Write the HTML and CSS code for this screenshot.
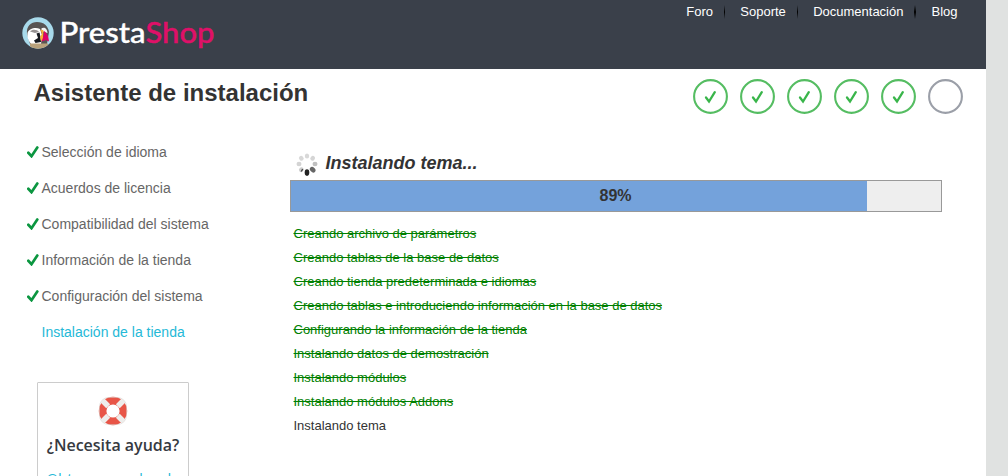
FILE: index.html
```html
<!DOCTYPE html>
<html lang="es">
<head>
<meta charset="utf-8">
<title>Asistente de instalación</title>
<link rel="stylesheet" href="styles.css">
</head>
<body>
<svg class="defs" width="0" height="0">
  <symbol id="tick" viewBox="0 0 12 12"><path d="M1.3 6.8 4.5 10.2 10.3 1.5" fill="none" stroke="#0b9640" stroke-width="2.7" stroke-linecap="round"/></symbol>
  <symbol id="step" viewBox="0 0 35 35"><circle cx="17.5" cy="17.5" r="16.4" fill="#fff" stroke="#55bd62" stroke-width="2.1"/><path d="M13 18.5 16 22.5 21.8 13.2" fill="none" stroke="#39b54a" stroke-width="2.3" stroke-linecap="round"/></symbol>
</svg>
<div class="page">
  <header class="header">
    <svg class="logo" width="200" height="40" viewBox="0 0 200 40">
      <defs><clipPath id="badge"><circle cx="16" cy="16" r="15.7"/></clipPath></defs>
      <g clip-path="url(#badge)">
        <rect width="32" height="32" fill="#a8daeb"/>
        <path d="M5 17C4 9 9 5 15 5 22 5 26 9 27 15L25 27H8Z" fill="#585453"/>
        <path d="M5.500 16C7 11 14 10 18 12L20 18 19 27H9C6 23 5 20 5.500 16Z" fill="#fff"/>
        <path d="M19 12C21 10 25 10 25.500 16L22 15Z" fill="#f4f4f4"/>
        <path d="M8 14.500C10 12 15 12 17 15L13 16Z" fill="#969292"/>
        <path d="M14.500 16.500 17.500 15.500 18.500 20 19 25 13.500 26 12 23.500 16 21Z" fill="#171a20"/>
        <path d="M18.500 12.500 21.500 13.500 21 23 19 24 18 20 20 17Z" fill="#fbb034"/>
        <path d="M22 14C25 16 26.500 19 27 24.500L24 23 19.500 24.500C21 21 22 18 22 14Z" fill="#df0067"/>
        <path d="M8 26.500H26V32H8Z" fill="#b9a17b"/>
      </g>
      <text class="brand" x="37.5" y="26" textLength="86" lengthAdjust="spacingAndGlyphs">Presta</text>
      <text class="brand brand-pink" x="123.5" y="26" textLength="69" lengthAdjust="spacingAndGlyphs">Shop</text>
    </svg>
    <nav class="links"><a>Foro</a><i class="sep"></i><a>Soporte</a><i class="sep"></i><a>Documentación</a><i class="sep sep-wide"></i><a>Blog</a></nav>
  </header>
  <div class="titlebar">
    <h1>Asistente de instalación</h1>
    <div class="steps">
      <svg><use href="#step"/></svg><svg><use href="#step"/></svg><svg><use href="#step"/></svg><svg><use href="#step"/></svg><svg><use href="#step"/></svg>
      <svg viewBox="0 0 35 35"><circle cx="17.5" cy="17.5" r="16.4" fill="#fff" stroke="#9b9fa8" stroke-width="2.1"/></svg>
    </div>
  </div>
  <div class="content">
    <aside>
      <ul class="menu">
        <li><svg><use href="#tick"/></svg>Selección de idioma</li>
        <li><svg><use href="#tick"/></svg>Acuerdos de licencia</li>
        <li><svg><use href="#tick"/></svg>Compatibilidad del sistema</li>
        <li><svg><use href="#tick"/></svg>Información de la tienda</li>
        <li><svg><use href="#tick"/></svg>Configuración del sistema</li>
        <li class="current">Instalación de la tienda</li>
      </ul>
      <div class="help">
        <svg width="30" height="30" viewBox="0 0 30 30">
          <circle cx="15" cy="15" r="10.4" fill="none" stroke="#e85547" stroke-width="7.6"/>
          <path d="M4.500 4.500 10.2 10.2M25.500 4.500 19.8 10.200M4.500 25.500 10.200 19.800M25.500 25.500 19.800 19.800" stroke="#eeedeb" stroke-width="5.5"/>
          <rect x="1.5" y="1.5" width="27" height="27" rx="9" fill="none" stroke="#d8d4d0" stroke-width=".6"/>
        </svg>
        <strong>¿Necesita ayuda?</strong>
        <a>Obtener ayuda a la</a>
      </div>
    </aside>
    <main>
      <h2><svg width="24" height="24" viewBox="-12 -12 24 24">
        <g><ellipse cy="-8" rx="2.2" ry="2.5" fill="#d8d8d8"/><ellipse cy="-8" rx="2.2" ry="2.5" fill="#d5d5d5" transform="rotate(45)"/><ellipse cy="-8" rx="2.2" ry="2.5" fill="#c0c0c0" transform="rotate(90)"/><ellipse cy="-8" rx="2.4" ry="3.2" fill="#666" transform="rotate(135)"/><ellipse cy="-8.6" rx="2.3" ry="3.3" fill="#222" transform="rotate(180)"/><ellipse cy="-8" rx="2.2" ry="2.5" fill="#ccc" transform="rotate(225)"/><ellipse cy="-8" rx="2.2" ry="2.5" fill="#d4d4d4" transform="rotate(270)"/><ellipse cy="-8" rx="2.2" ry="2.5" fill="#d8d8d8" transform="rotate(315)"/></g>
        <path d="M-5.800 7.500-4.300 5.200" stroke="#444" stroke-width="1.3"/>
      </svg>Instalando tema...</h2>
      <div class="progress"><div class="fill"></div><span>89%</span></div>
      <ol class="tasks">
        <li class="done">Creando archivo de parámetros</li>
        <li class="done">Creando tablas de la base de datos</li>
        <li class="done">Creando tienda predeterminada e idiomas</li>
        <li class="done">Creando tablas e introduciendo información en la base de datos</li>
        <li class="done">Configurando la información de la tienda</li>
        <li class="done">Instalando datos de demostración</li>
        <li class="done">Instalando módulos</li>
        <li class="done">Instalando módulos Addons</li>
        <li>Instalando tema</li>
      </ol>
    </main>
  </div>
</div>
</body>
</html>
```
FILE: styles.css
```css
* { box-sizing: border-box; margin: 0; padding: 0; }
html, body { height: 476px; overflow: hidden; }
body { background: #e0e2e1; font: 13px/24px "Liberation Sans", Arial, sans-serif; color: #333; }
svg { display: block; flex: none; }
.defs { position: absolute; }
.page { width: 986px; height: 476px; background: #fff; overflow: hidden; }
.header { height: 69px; background: #3a404a; display: flex; justify-content: space-between; padding-left: 22px; }
.logo { margin-top: 17px; }
.brand { font: 500 28px Lato, sans-serif; fill: #fff; stroke: #fff; stroke-width: .4px; }
.brand-pink { fill: #df1068; stroke: #df1068; }
.links { display: flex; color: #fff; padding-right: 28.5px; height: 24px; }
.sep { width: 1px; height: 14px; margin: 5px 15.3px 0 11px; background: linear-gradient(#3a404a, #000 50%, #3a404a); }
.sep-wide { width: 2px; margin-right: 15px; }
.titlebar { height: 61px; padding: 10px 23px 0 33.5px; display: flex; justify-content: space-between; }
h1 { font-size: 24px; line-height: 28px; }
.steps { display: flex; gap: 12px; }
.steps svg { width: 35px; height: 35px; }
.content { display: flex; }
aside { width: 290px; padding-top: 4px; }
.menu { list-style: none; font-size: 14px; color: #666; }
.menu li { height: 36px; padding-left: 26.5px; display: flex; align-items: center; }
.menu svg { width: 12px; height: 12px; margin-right: 3px; }
.menu .current { color: #25b9d7; padding-left: 41.5px; }
.help { width: 152px; height: 180px; margin: 32px 0 0 37px; border: 1px solid #ccc; border-radius: 1px; padding-top: 13px; display: flex; flex-direction: column; align-items: center; font-family: "Open Sans", sans-serif; }
.help strong { font-size: 16px; font-weight: 600; line-height: 24px; margin-top: 7px; color: #363a41; white-space: nowrap; }
.help a { font-size: 15px; line-height: 24px; margin-top: 9px; color: #25b9d7; white-space: nowrap; }
main { width: 652px; padding-top: 20px; }
h2 { display: flex; font-size: 18px; line-height: 26px; font-style: italic; height: 30px; padding-left: 5px; }
h2 svg { margin: 2px 6.5px 0 0; }
.progress { display: grid; height: 32px; border: 1px solid #999; background: #eee; font-size: 16px; font-weight: bold; line-height: 30px; text-align: center; }
.progress > * { grid-area: 1 / 1; }
.progress span { padding-right: 1px; }
.fill { width: 576px; background: #74a2db; }
.tasks { list-style: none; padding: 10px 0 0 3.5px; }
.tasks li { height: 24px; }
.done { color: green; text-decoration: line-through; }
```
